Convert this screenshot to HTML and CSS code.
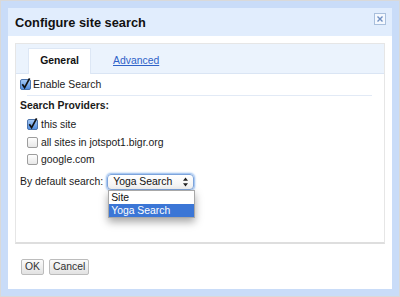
FILE: index.html
```html
<!DOCTYPE html>
<html lang="en">
<head>
  <meta charset="UTF-8" />
  <title>Configure site search</title>
  <link rel="stylesheet" href="styles.css">
</head>
<body>

  <!-- shared gradients for the checkboxes -->
  <svg class="defs" width="0" height="0">
    <defs>
      <linearGradient id="boxOn" x1="0" y1="0" x2="0" y2="1">
        <stop offset="0" stop-color="#a9cbf5" />
        <stop offset="1" stop-color="#4f8ce0" />
      </linearGradient>
      <linearGradient id="boxOff" x1="0" y1="0" x2="0" y2="1">
        <stop offset="0" stop-color="#ffffff" />
        <stop offset="1" stop-color="#e6e6e6" />
      </linearGradient>
    </defs>
  </svg>

  <div class="dialog">

    <!-- Title -->
    <div class="titlebar">
      <span class="title">Configure site search</span>
      <span class="close">
        <svg width="12" height="12" viewBox="0 0 12 12">
          <rect x="0.5" y="0.5" width="11" height="11" fill="#f4f8fe" stroke="#a9bfdc" />
          <path d="M3.5 3.5 L8.5 8.5 M8.5 3.5 L3.5 8.5" stroke="#6f8fc2" stroke-width="1.4" />
        </svg>
      </span>
    </div>

    <div class="body">
      <div class="panel">
        <div class="tabs">
          <div class="tab active">General</div>
          <a class="tab-link">Advanced</a>
        </div>

        <div class="panel-content">
          <div class="check-row enable">
            <svg class="cb" width="11" height="11" viewBox="0 0 11 11">
              <rect x="0.5" y="0.5" width="10" height="10" rx="1.5" fill="url(#boxOn)" stroke="#4d74ab" />
              <path d="M2.3 5.2 L4.6 8.6 L9.6 -0.6" fill="none" stroke="#111" stroke-width="1.7" />
            </svg>
            <span>Enable Search</span>
          </div>
          <div class="sep"></div>

          <div class="heading">Search Providers:</div>
          <div class="providers">
            <div class="check-row">
              <svg class="cb" width="11" height="11" viewBox="0 0 11 11">
                <rect x="0.5" y="0.5" width="10" height="10" rx="1.5" fill="url(#boxOn)" stroke="#4d74ab" />
                <path d="M2.3 5.2 L4.6 8.6 L9.6 -0.6" fill="none" stroke="#111" stroke-width="1.7" />
              </svg>
              <span>this site</span>
            </div>
            <div class="check-row">
              <svg class="cb" width="11" height="11" viewBox="0 0 11 11">
                <rect x="0.5" y="0.5" width="10" height="10" rx="1.5" fill="url(#boxOff)" stroke="#9d9d9d" />
              </svg>
              <span>all sites in jotspot1.bigr.org</span>
            </div>
            <div class="check-row">
              <svg class="cb" width="11" height="11" viewBox="0 0 11 11">
                <rect x="0.5" y="0.5" width="10" height="10" rx="1.5" fill="url(#boxOff)" stroke="#9d9d9d" />
              </svg>
              <span>google.com</span>
            </div>
          </div>

          <div class="default-row">
            <span>By default search:</span>
            <div class="select">
              <span class="select-value">Yoga Search</span>
              <svg class="arrows" width="7" height="10" viewBox="0 0 7 10">
                <path d="M3.5 0.5 L6 3.8 L1 3.8 Z M3.5 9.5 L6 6.2 L1 6.2 Z" fill="#222" />
              </svg>
              <div class="dropdown">
                <div class="option">Site</div>
                <div class="option selected">Yoga Search</div>
              </div>
            </div>
          </div>
        </div>
      </div>

      <div class="buttons">
        <button class="btn">OK</button>
        <button class="btn">Cancel</button>
      </div>
    </div>
  </div>

</body>
</html>
```

FILE: styles.css
```css
* {
  box-sizing: border-box;
}

body {
  margin: 0;
  background-color: #d9d9d9;
  font-family: 'Liberation Sans', Arial, sans-serif;
  font-size: 10.4px;
  color: #1a1a1a;
}

.defs {
  position: absolute;
}

/* Dialog frame */
.dialog {
  margin: 1px 0 0 1px;
  width: 398px;
  height: 295px;
  border: 7px solid #c9dcf8;
  background-color: white;
  display: flex;
  flex-direction: column;
}

.titlebar {
  height: 28px;
  background-color: #e1edfd;
  display: flex;
  align-items: flex-start;
  justify-content: space-between;
  padding: 0 6px 0 7px;
}

.title {
  font-size: 12.8px;
  font-weight: bold;
  color: #111;
  line-height: 14px;
  margin-top: 8px;
}

.close {
  margin-top: 5px;
  display: flex;
}

.body {
  padding: 7px;
  flex: 1;
}

/* Tab panel */
.panel {
  height: 201px;
  border: 1px solid #e6e6e6;
  border-bottom: 2px solid #dedede;
  display: flex;
  flex-direction: column;
}

.tabs {
  height: 30px;
  background-color: #ebf3fd;
  border-bottom: 1px solid #dae5f4;
  display: flex;
  align-items: flex-end;
  padding-left: 12px;
}

.tab {
  width: 63px;
  height: 26px;
  margin-bottom: -1px;
  background-color: white;
  border: 1px solid #dde7f5;
  border-bottom: none;
  font-weight: bold;
  text-align: center;
  line-height: 24px;
  color: #111;
}

.tab-link {
  margin-left: 22px;
  align-self: center;
  margin-top: 3px;
  color: #2f62c8;
  text-decoration: underline;
}

.panel-content {
  padding: 4px 0 0 4px;
}

.check-row {
  display: flex;
  align-items: center;
  gap: 2px;
  height: 12px;
}

.check-row .cb {
  overflow: visible;
  flex-shrink: 0;
}

.enable {
  height: 13px;
}

.sep {
  height: 1px;
  background-color: #e2eaf6;
  margin: 4px 12px 0 7px;
}

.heading {
  font-weight: bold;
  margin-top: 3px;
  line-height: 13px;
  margin-left: 0;
}

.providers {
  margin: 4px 0 0 7px;
  display: flex;
  flex-direction: column;
}

.providers .check-row {
  height: 17.5px;
  gap: 3px;
}

.default-row {
  display: flex;
  align-items: center;
  gap: 4px;
  margin-top: 5px;
  height: 16px;
}

/* Select (focused, open) */
.select {
  position: relative;
  width: 87px;
  height: 16px;
  border: 1px solid #7da4dc;
  border-radius: 4px;
  box-shadow: 0 0 2px 1px #8bb5ec;
  background: linear-gradient(#ffffff, #f1f1f1);
  display: flex;
  align-items: center;
  justify-content: space-between;
  padding: 0 4px 0 5px;
  color: #111;
}

.dropdown {
  position: absolute;
  top: 15px;
  left: 0;
  width: 87px;
  background-color: white;
  border: 1px solid #a8a8a8;
  box-shadow: 0 4px 8px rgba(0, 0, 0, 0.35);
}

.option {
  height: 13px;
  line-height: 13px;
  padding-left: 2px;
}

.option.selected {
  background-color: #3b76d6;
  color: white;
}

/* Footer buttons */
.buttons {
  display: flex;
  gap: 5px;
  margin: 15px 0 0 6px;
}

.btn {
  height: 16px;
  padding: 0 3px;
  border: 1px solid #bcbcbc;
  border-radius: 2px;
  background: linear-gradient(#fbfbfb, #e2e2e2);
  font-family: 'Liberation Sans', Arial, sans-serif;
  font-size: 10.4px;
  color: #333;
  line-height: 14px;
}
```
